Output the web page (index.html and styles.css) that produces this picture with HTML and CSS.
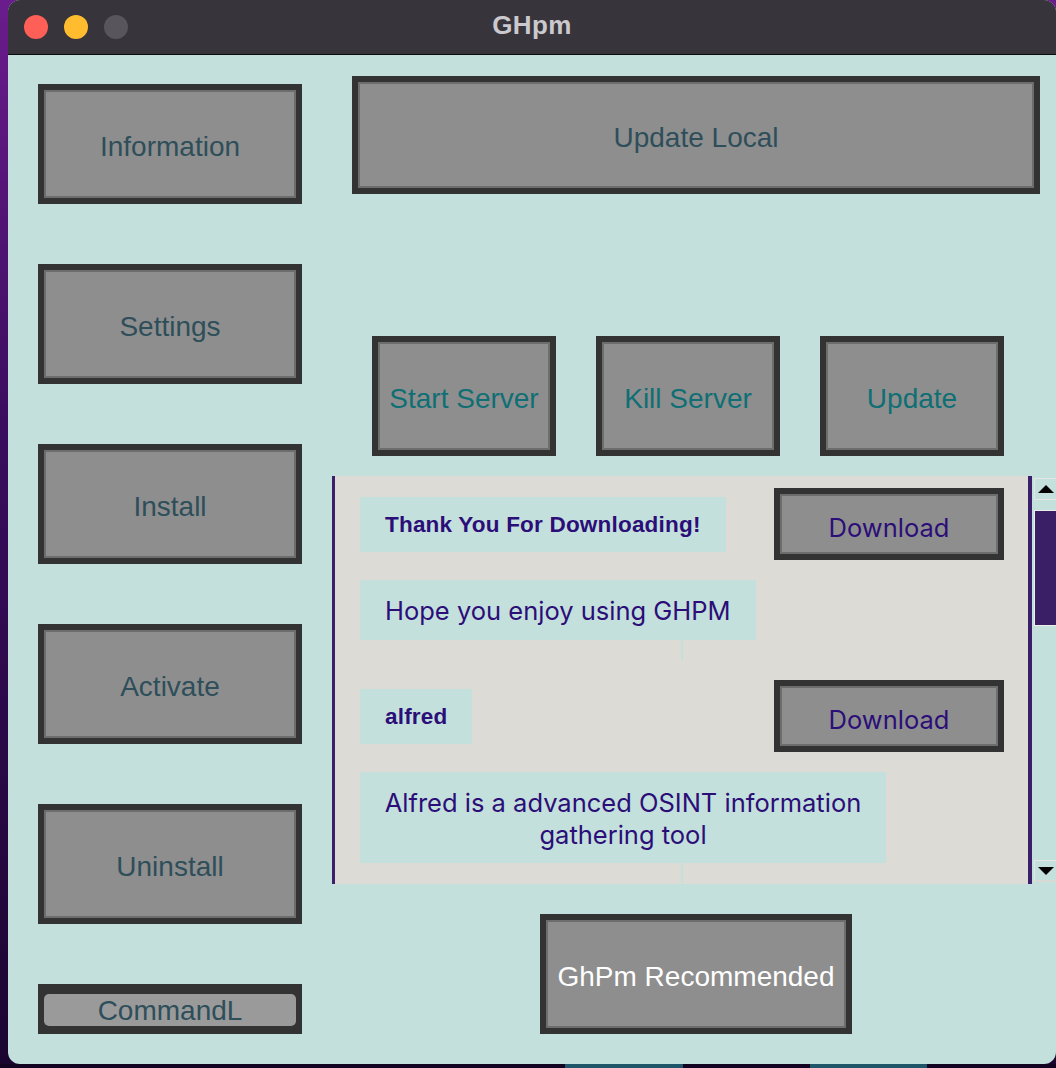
FILE: index.html
```
<!DOCTYPE html>
<html>
<head>
<meta charset="utf-8">
<title>GHpm</title>
<link rel="stylesheet" href="styles.css">
</head>
<body>
<div class="window">
  <div class="titlebar">
    <div class="lights">
      <span class="light red"></span>
      <span class="light yellow"></span>
      <span class="light gray"></span>
    </div>
    <div class="title">GHpm</div>
    <div></div>
  </div>
  <div class="content">
    <div class="sidebar">
      <div class="btn side">Information</div>
      <div class="btn side">Settings</div>
      <div class="btn side">Install</div>
      <div class="btn side">Activate</div>
      <div class="btn side">Uninstall</div>
      <div class="cmd"><div class="cmd-inner">CommandL</div></div>
    </div>
    <div class="main">
      <div class="btn update-local">Update Local</div>
      <div class="server-row">
        <div class="btn server">Start Server</div>
        <div class="btn server">Kill Server</div>
        <div class="btn server">Update</div>
      </div>
      <div class="list-wrap">
        <div class="list">
          <div class="item">
            <div class="item-head">
              <div class="label title-label">Thank You For Downloading!</div>
              <div class="btn download">Download</div>
            </div>
            <div class="label desc">Hope you enjoy using GHPM</div>
            <div class="sep"></div>
          </div>
          <div class="item">
            <div class="item-head">
              <div class="label title-label">alfred</div>
              <div class="btn download">Download</div>
            </div>
            <div class="label desc desc-wide">Alfred is a advanced OSINT information gathering tool</div>
            <div class="sep"></div>
          </div>
        </div>
        <div class="scrollbar">
          <div class="arrow up"><span class="tri-up"></span></div>
          <div class="thumb"></div>
          <div class="arrow down"><span class="tri-down"></span></div>
        </div>
      </div>
      <div class="btn recommended">GhPm Recommended</div>
    </div>
  </div>
</div>
<div class="dock">
  <span class="dock-item d1"></span>
  <span class="dock-item d2"></span>
</div>
</body>
</html>
```
FILE: styles.css
```
html, body {
  margin: 0;
  padding: 0;
}
body {
  width: 1056px;
  height: 1068px;
  overflow: hidden;
  background: linear-gradient(180deg, #6a1c8c 0%, #3a0d5e 40%, #1a0530 100%);
  font-family: "Liberation Sans", Arial, sans-serif;
}
.window {
  margin-left: 8px;
  width: 1048px;
  height: 1064px;
  border-radius: 12px;
  overflow: hidden;
  background: #c4e0dc;
  box-sizing: border-box;
  display: flex;
  flex-direction: column;
}
.titlebar {
  height: 54px;
  flex: none;
  background: #37353b;
  border-bottom: 1px solid #0c0c0c;
  display: grid;
  grid-template-columns: 1fr auto 1fr;
  align-items: center;
}
.lights {
  display: flex;
  gap: 16px;
  padding-left: 16px;
}
.light {
  width: 24px;
  height: 24px;
  border-radius: 50%;
  display: block;
}
.red { background: #fe5f57; }
.yellow { background: #febc2e; }
.gray { background: #58555c; }
.title {
  color: #cbc9cd;
  font-weight: bold;
  font-size: 26px;
  letter-spacing: 0.4px;
  padding-bottom: 4px;
}
.content {
  flex: 1;
  display: flex;
  padding-left: 30px;
}
.sidebar {
  width: 264px;
  display: flex;
  flex-direction: column;
  gap: 60px;
  padding-top: 29px;
}
.btn {
  box-sizing: border-box;
  border: 6px solid #333333;
  background: #8e8e8e;
  box-shadow: inset 0 0 0 2px #6d6d6d;
  display: flex;
  align-items: center;
  justify-content: center;
  font-size: 28px;
  white-space: nowrap;
  padding-top: 6px;
}
.side {
  height: 120px;
  color: #2e4e5a;
}
.cmd {
  height: 50px;
  background: #333333;
  box-sizing: border-box;
  padding: 10px 6px 8px 6px;
}
.cmd-inner {
  height: 32px;
  border-radius: 5px;
  background: #9a9a9a;
  color: #2e4e5a;
  font-size: 28px;
  line-height: 33px;
  text-align: center;
}
.main {
  margin-left: 30px;
  width: 724px;
  display: flex;
  flex-direction: column;
}
.update-local {
  margin-top: 21px;
  margin-left: 20px;
  width: 688px;
  height: 118px;
  color: #2e4e5a;
}
.server-row {
  margin-top: 142px;
  margin-left: 40px;
  display: flex;
  gap: 40px;
}
.server {
  width: 184px;
  height: 120px;
  color: #0f6f74;
}
.list-wrap {
  margin-top: 20px;
  height: 408px;
  display: flex;
}
.list {
  width: 700px;
  box-sizing: border-box;
  background: #dcdbd6;
  border-left: 3px solid #3a1f6a;
  border-right: 4px solid #3a1f6a;
  padding: 12px 24px 0 25px;
  overflow: hidden;
  display: flex;
  flex-direction: column;
  gap: 20px;
}
.item {
  display: flex;
  flex-direction: column;
}
.item-head {
  height: 72px;
  display: flex;
  align-items: center;
  justify-content: space-between;
}
.label {
  background: #c4e0dc;
  color: #2b0e78;
}
.title-label {
  height: 55px;
  padding: 2px 25px 0;
  box-sizing: border-box;
  display: flex;
  align-items: center;
  font-weight: bold;
  font-size: 22.5px;
  letter-spacing: 0.2px;
}
.download {
  width: 230px;
  height: 72px;
  color: #2b0e78;
  font-family: Inter, "Noto Sans", sans-serif;
  font-size: 25.5px;
}
.desc {
  align-self: flex-start;
  margin-top: 20px;
  padding: 15px 25px 13px;
  font-family: Inter, "Noto Sans", sans-serif;
  font-size: 25.5px;
  line-height: 32px;
  text-align: center;
}
.desc-wide {
  width: 526px;
  box-sizing: border-box;
  padding: 15px 18px 12px;
}
.sep {
  align-self: center;
  width: 2px;
  height: 20px;
  background: #c4e0dc;
}
.scrollbar {
  width: 24px;
  box-sizing: border-box;
  padding: 2px 0 2px 2px;
  display: flex;
  flex-direction: column;
}
.arrow {
  height: 22px;
  box-sizing: border-box;
  border: 1px solid #e6e6e2;
  border-right: none;
  background: #c4e0dc;
  display: flex;
  align-items: center;
  justify-content: center;
}
.arrow.down {
  margin-top: auto;
  border-bottom: 2px solid #d8d8d4;
}
.tri-up {
  width: 0;
  height: 0;
  border-left: 8px solid transparent;
  border-right: 8px solid transparent;
  border-bottom: 8px solid #000;
}
.tri-down {
  width: 0;
  height: 0;
  border-left: 8px solid transparent;
  border-right: 8px solid transparent;
  border-top: 8px solid #000;
}
.thumb {
  margin-top: 10px;
  height: 116px;
  box-sizing: border-box;
  background: #3b1f66;
  border: 1px solid #ecece8;
  border-right: none;
}
.recommended {
  margin-top: 30px;
  margin-left: 208px;
  width: 312px;
  height: 120px;
  color: #ffffff;
}
.dock {
  height: 4px;
  display: flex;
  background: #120420;
}
.dock-item {
  display: block;
  height: 4px;
  background: #1e5568;
}
.d1 { margin-left: 565px; width: 118px; }
.d2 { margin-left: 127px; width: 117px; }
```
